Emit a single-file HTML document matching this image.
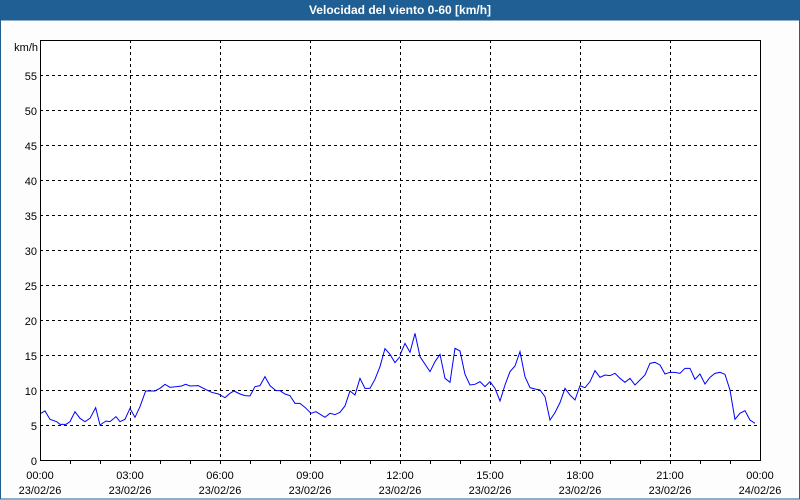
<!DOCTYPE html>
<html><head><style>
html,body{margin:0;padding:0;background:#fff;width:800px;height:500px;overflow:hidden}
#t{position:absolute;left:0;top:0;width:800px;height:20px;background:#1f5f94;color:#fff;font:bold 12px "Liberation Sans",sans-serif;text-align:center;line-height:21px}
svg{position:absolute;left:0;top:0}
text{font-family:"Liberation Sans",sans-serif;font-size:11px;fill:#000}
</style></head><body>
<svg width="800" height="500">
<rect x="0" y="20" width="800" height="480" fill="#fdfdfd"/>
<rect x="0.5" y="20" width="799" height="479" fill="none" stroke="#1f5f94" stroke-width="1"/>
<rect x="40" y="40" width="720" height="420" fill="#fff"/>
<g stroke="#000" stroke-width="1" stroke-dasharray="3,3">
<line x1="40" y1="75.5" x2="760" y2="75.5"/><line x1="40" y1="110.5" x2="760" y2="110.5"/><line x1="40" y1="145.5" x2="760" y2="145.5"/><line x1="40" y1="180.5" x2="760" y2="180.5"/><line x1="40" y1="215.5" x2="760" y2="215.5"/><line x1="40" y1="250.5" x2="760" y2="250.5"/><line x1="40" y1="285.5" x2="760" y2="285.5"/><line x1="40" y1="320.5" x2="760" y2="320.5"/><line x1="40" y1="355.5" x2="760" y2="355.5"/><line x1="40" y1="390.5" x2="760" y2="390.5"/><line x1="40" y1="425.5" x2="760" y2="425.5"/>
<line x1="130.5" y1="40" x2="130.5" y2="460"/><line x1="220.5" y1="40" x2="220.5" y2="460"/><line x1="310.5" y1="40" x2="310.5" y2="460"/><line x1="400.5" y1="40" x2="400.5" y2="460"/><line x1="490.5" y1="40" x2="490.5" y2="460"/><line x1="580.5" y1="40" x2="580.5" y2="460"/><line x1="670.5" y1="40" x2="670.5" y2="460"/>
</g>
<rect x="40.5" y="40.5" width="720" height="420" fill="none" stroke="#000"/>
<g stroke="#000">
<line x1="70.5" y1="460" x2="70.5" y2="464"/><line x1="100.5" y1="460" x2="100.5" y2="464"/><line x1="130.5" y1="460" x2="130.5" y2="464"/><line x1="160.5" y1="460" x2="160.5" y2="464"/><line x1="190.5" y1="460" x2="190.5" y2="464"/><line x1="220.5" y1="460" x2="220.5" y2="464"/><line x1="250.5" y1="460" x2="250.5" y2="464"/><line x1="280.5" y1="460" x2="280.5" y2="464"/><line x1="310.5" y1="460" x2="310.5" y2="464"/><line x1="340.5" y1="460" x2="340.5" y2="464"/><line x1="370.5" y1="460" x2="370.5" y2="464"/><line x1="400.5" y1="460" x2="400.5" y2="464"/><line x1="430.5" y1="460" x2="430.5" y2="464"/><line x1="460.5" y1="460" x2="460.5" y2="464"/><line x1="490.5" y1="460" x2="490.5" y2="464"/><line x1="520.5" y1="460" x2="520.5" y2="464"/><line x1="550.5" y1="460" x2="550.5" y2="464"/><line x1="580.5" y1="460" x2="580.5" y2="464"/><line x1="610.5" y1="460" x2="610.5" y2="464"/><line x1="640.5" y1="460" x2="640.5" y2="464"/><line x1="670.5" y1="460" x2="670.5" y2="464"/><line x1="700.5" y1="460" x2="700.5" y2="464"/><line x1="730.5" y1="460" x2="730.5" y2="464"/>
</g>
<g text-anchor="end">
<text x="38" y="51">km/h</text>
<text x="37" y="80">55</text><text x="37" y="115">50</text><text x="37" y="150">45</text><text x="37" y="185">40</text><text x="37" y="220">35</text><text x="37" y="255">30</text><text x="37" y="290">25</text><text x="37" y="325">20</text><text x="37" y="360">15</text><text x="37" y="395">10</text><text x="37" y="430">5</text><text x="37" y="465">0</text>
</g>
<g text-anchor="middle">
<text x="40" y="479">00:00</text><text x="40" y="494">23/02/26</text>
<text x="130" y="479">03:00</text><text x="130" y="494">23/02/26</text>
<text x="220" y="479">06:00</text><text x="220" y="494">23/02/26</text>
<text x="310" y="479">09:00</text><text x="310" y="494">23/02/26</text>
<text x="400" y="479">12:00</text><text x="400" y="494">23/02/26</text>
<text x="490" y="479">15:00</text><text x="490" y="494">23/02/26</text>
<text x="580" y="479">18:00</text><text x="580" y="494">23/02/26</text>
<text x="670" y="479">21:00</text><text x="670" y="494">23/02/26</text>
<text x="760" y="479">00:00</text><text x="760" y="494">24/02/26</text>
</g>
<g fill="none" stroke="#0000ff" stroke-width="1">
<polyline transform="translate(30,320) scale(0.3333)" vector-effect="non-scaling-stroke" points="33,280 45,273 60,298 80,305 90,313 108,313 120,305 135,275 150,295 165,305 180,295 197,263 210,315 228,303 240,305 258,290 270,305 285,298 300,265 315,292 330,260 347,213 375,213 390,205 405,193 420,202 440,200 455,198 467,193 480,198 505,197 520,205 545,217 565,222 585,233 600,220 612,213 630,222 645,227 660,228 675,200 690,197 705,170 720,197 738,212 750,212 765,222 780,227 795,250 810,250 825,262 843,280 858,275 885,292 900,280 915,284 930,277 945,258 960,213 975,225 990,175 1005,205 1020,205 1035,178 1050,140 1065,86 1080,103 1095,128 1110,110"/>
<polyline transform="translate(400,320) scale(0.3333)" vector-effect="non-scaling-stroke" points="0,105 15,70 30,97 45,40 60,110 90,155 105,125 120,103 135,175 150,187 165,85 180,93 195,163 210,195 225,193 240,185 255,200 270,185 285,205 300,243 315,195 330,155 345,138 360,95 375,170 390,203 405,207 420,210 435,230 450,300 465,278 480,248 495,205 510,225 525,240 540,197 555,203 570,185 585,152 600,172 615,165 630,167 645,160 660,175 675,187 690,175 705,195 720,180 735,165 750,130 765,127 780,135 795,162 810,157 825,157 840,160 855,145 870,145 885,178 900,162 915,192 930,172 945,160 960,157 975,163 990,210 1005,298 1020,280 1035,272 1050,300 1065,310"/>
</g>
</svg>
<div id="t">Velocidad del viento 0-60 [km/h]</div>
</body></html>
